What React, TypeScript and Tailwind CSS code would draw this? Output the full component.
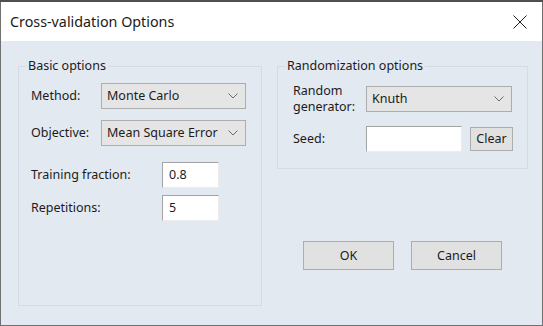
function Chevron() {
  return (
    <svg width="10" height="6" viewBox="0 0 10 6" fill="none">
      <path d="M0.5 0.5 L5 5 L9.5 0.5" stroke="#6b6b6b" strokeWidth="1" />
    </svg>
  );
}

function Combo({ value, width }: { value: string; width: string }) {
  return (
    <div
      className={`${width} flex h-[26px] items-center justify-between border border-[#adadad] bg-[#e5e5e5] pl-[5px] pr-[7px]`}
    >
      <span>{value}</span>
      <Chevron />
    </div>
  );
}

function TextBox({ value, width }: { value: string; width: string }) {
  return (
    <div
      className={`${width} flex h-[26px] items-center border-t border-l border-b border-r border-t-[#a3a3a3] border-l-[#a3a3a3] border-b-[#ececec] border-r-[#ececec] bg-white pl-[6px]`}
    >
      {value}
    </div>
  );
}

function Button({ label, className }: { label: string; className: string }) {
  return (
    <div
      className={`${className} flex items-center justify-center border border-[#adadad] bg-[#e1e1e1]`}
    >
      {label}
    </div>
  );
}

export default function App() {
  return (
    <div className="flex h-[326px] w-[543px] flex-col bg-[#e3e9f1] font-['Noto_Sans',sans-serif] text-[12.5px] leading-[16px] text-[#1b1b1b]">
      <div className="h-[2px] bg-[#4f4f4f]" />
      <div className="flex flex-1 flex-col border-x border-b border-[#707070]">
        <div className="flex h-[39px] items-center justify-between bg-white pl-[9px] pr-[15px]">
          <span className="text-[14.3px] leading-[20px] text-[#1a1a1a]">Cross-validation Options</span>
          <svg width="14" height="14" viewBox="0 0 14 14" fill="none">
            <path d="M0.5 0.5 L13.5 13.5 M13.5 0.5 L0.5 13.5" stroke="#1a1a1a" strokeWidth="1" />
          </svg>
        </div>

        <div className="flex flex-1 gap-[15px] pl-[17px] pt-[17px]">
          <fieldset className="h-[248px] w-[244px] border border-[#d5dbe3]">
            <legend className="ml-[7px] px-[2px]">Basic options</legend>
            <div className="flex flex-col px-[12px] pt-[9px]">
              <div className="flex items-center">
                <span className="w-[70px]">Method:</span>
                <Combo value="Monte Carlo" width="w-[145px]" />
              </div>
              <div className="mt-[11px] flex items-center">
                <span className="w-[70px]">Objective:</span>
                <Combo value="Mean Square Error" width="w-[145px]" />
              </div>
              <div className="mt-[16px] flex items-center">
                <span className="w-[131px]">Training fraction:</span>
                <TextBox value="0.8" width="w-[57px]" />
              </div>
              <div className="mt-[7px] flex items-center">
                <span className="w-[131px]">Repetitions:</span>
                <TextBox value="5" width="w-[57px]" />
              </div>
            </div>
          </fieldset>

          <div className="flex flex-col">
            <fieldset className="h-[111px] w-[251px] border border-[#d5dbe3]">
              <legend className="ml-[7px] px-[2px]">Randomization options</legend>
              <div className="flex flex-col pl-[15px] pt-[9px]">
                <div className="flex items-center">
                  <span className="w-[73px]">
                    Random
                    <br />
                    generator:
                  </span>
                  <Combo value="Knuth" width="w-[146px]" />
                </div>
                <div className="mt-[11px] flex items-center">
                  <span className="w-[73px]">Seed:</span>
                  <TextBox value="" width="w-[96px]" />
                  <Button label="Clear" className="ml-[8px] h-[24px] w-[43px]" />
                </div>
              </div>
            </fieldset>
            <div className="mt-[72px] flex gap-[17px] pl-[26px]">
              <Button label="OK" className="h-[29px] w-[91px]" />
              <Button label="Cancel" className="h-[29px] w-[91px]" />
            </div>
          </div>
        </div>
      </div>
    </div>
  );
}
